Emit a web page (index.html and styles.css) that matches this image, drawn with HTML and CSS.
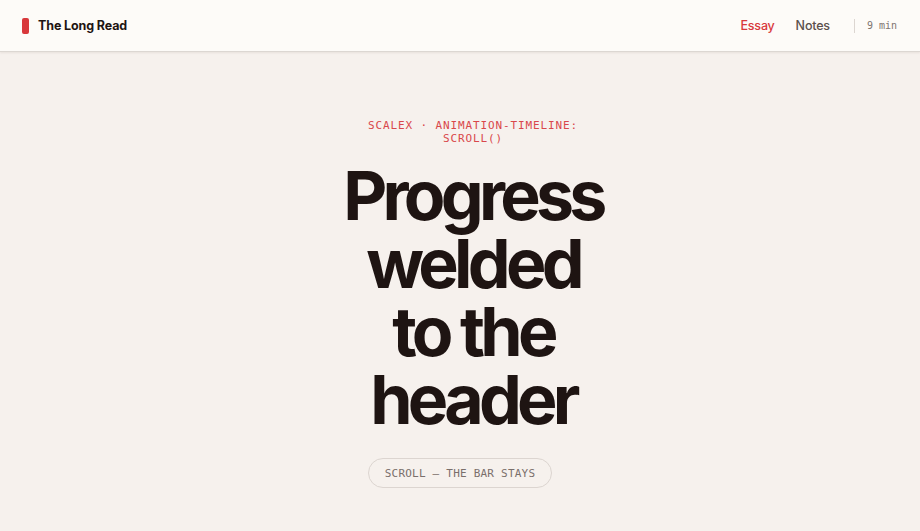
FILE: index.html
```html
<!DOCTYPE html>
<html lang="en">
<head>
<meta charset="utf-8">
<title>The Long Read</title>
<link rel="stylesheet" href="styles.css">
</head>
<body>
<header class="topbar">
  <div class="brand">
    <span class="brand-mark"></span>
    <span class="brand-name">The Long Read</span>
  </div>
  <nav class="nav">
    <a class="nav-link is-active" href="#">Essay</a>
    <a class="nav-link" href="#">Notes</a>
    <span class="read-time">9 min</span>
  </nav>
</header>
<main class="hero">
  <div class="hero-inner">
    <div class="hero-text">
      <p class="eyebrow">scaleX · animation-timeline: scroll()</p>
      <h1 class="title">Progress welded to the header</h1>
    </div>
    <span class="pill">Scroll — the bar stays</span>
  </div>
</main>
</body>
</html>
```

FILE: styles.css
```css
* { box-sizing: border-box; }
html, body { margin: 0; padding: 0; }
body {
  background: #f6f1ed;
  font-family: Inter, "Noto Sans", sans-serif;
  color: #1e1412;
  height: 531px;
  overflow: hidden;
}
.topbar {
  height: 52px;
  background: #fdfbf8;
  border-bottom: 1px solid #dcd7d2;
  box-shadow: 0 1px 2px rgba(60, 40, 30, 0.08);
  display: flex;
  align-items: center;
  justify-content: space-between;
  padding: 0 23px 0 22px;
}
.brand { display: flex; align-items: center; gap: 9px; }
.brand-mark {
  width: 7px;
  height: 16px;
  background: #d8383b;
  border-radius: 2px;
}
.brand-name {
  font-weight: 700;
  font-size: 12.5px;
  letter-spacing: -0.01em;
  color: #1e1412;
}
.nav { display: flex; align-items: center; }
.nav-link {
  text-decoration: none;
  font-size: 12.5px;
  font-weight: 500;
  letter-spacing: -0.015em;
  color: #5b504c;
  margin-left: 21px;
}
.nav-link.is-active { color: #d8383b; }
.read-time {
  margin-left: 24px;
  padding-left: 12px;
  border-left: 1px solid #dcd6d1;
  font-family: "DejaVu Sans Mono", monospace;
  font-size: 10px;
  color: #7e7470;
  line-height: 14px;
}
.hero {
  display: flex;
  justify-content: center;
  padding-top: 67px;
}
.hero-inner {
  display: flex;
  flex-direction: column;
  align-items: center;
  text-align: center;
}
.hero-text {
  width: 296px;
  padding-left: 26px;
}
.eyebrow {
  margin: 0;
  font-family: "DejaVu Sans Mono", monospace;
  font-size: 11px;
  line-height: 13px;
  letter-spacing: 0.08em;
  text-transform: uppercase;
  color: #d9474b;
}
.title {
  margin: 16px 0 0;
  font-size: 68px;
  line-height: 68px;
  font-weight: 700;
  letter-spacing: -0.07em;
  color: #1e1412;
}
.pill {
  margin-top: 25px;
  height: 30px;
  display: inline-flex;
  align-items: center;
  padding: 0 16px;
  border: 1px solid #dcd5d0;
  border-radius: 999px;
  font-family: "DejaVu Sans Mono", monospace;
  font-size: 11px;
  letter-spacing: 0.02em;
  text-transform: uppercase;
  color: #7a6f6b;
}
```
